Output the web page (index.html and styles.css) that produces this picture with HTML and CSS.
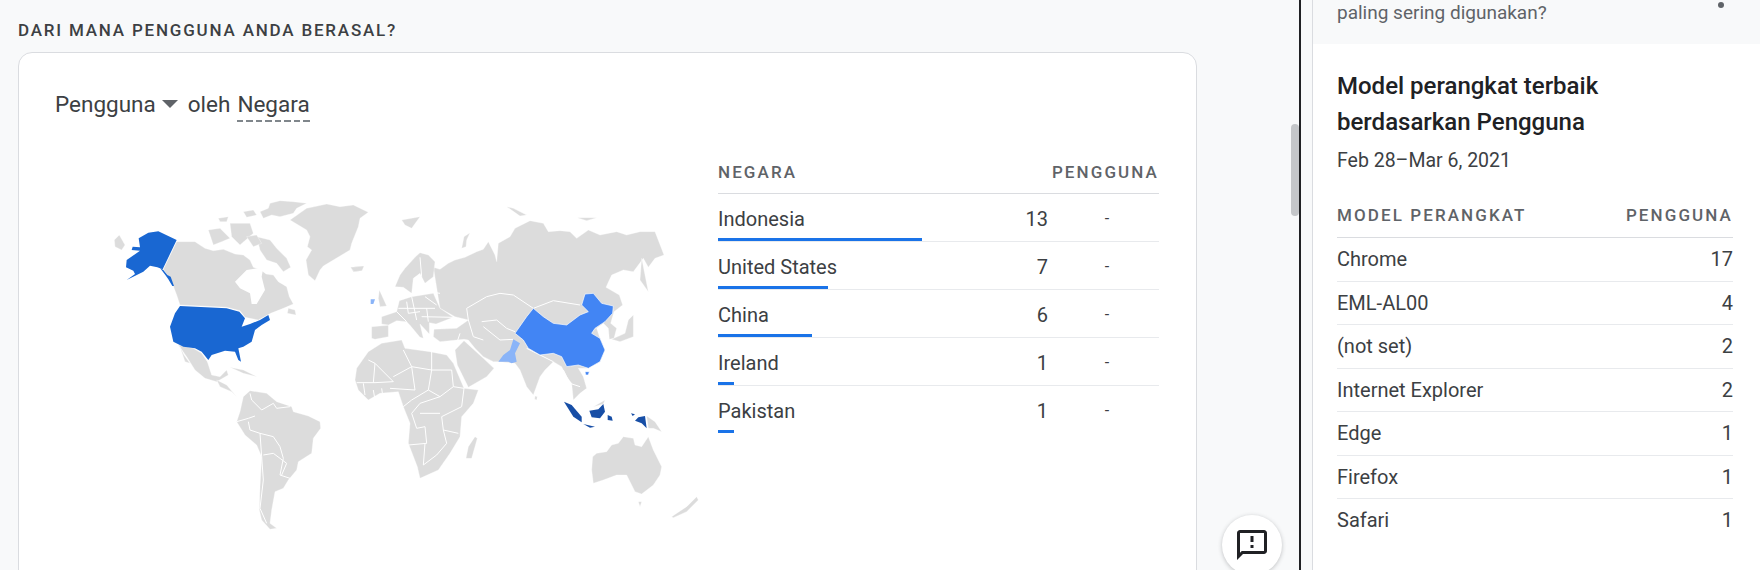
FILE: index.html
```html
<!DOCTYPE html>
<html lang="id">
<head>
  <meta charset="UTF-8">
  <title>Dari mana pengguna anda berasal?</title>
  <link rel="stylesheet" href="styles.css">
</head>
<body>

  <div class="page">
    <main class="main">
      <h2 class="section-title">DARI MANA PENGGUNA ANDA BERASAL?</h2>

      <section class="card">
        <div class="card-title">
          <span>Pengguna</span><span class="caret"></span>
          <span class="by">oleh</span>
          <span class="dim">Negara</span>
        </div>

        <div class="card-body">
          <svg class="map" viewBox="0 0 1890 1170" width="630" height="390">
            <!-- americas, coordinates are 3x screen px -->
            <g class="land">
              <polygon points="103,180 118,165 135,195 125,210 105,200"/>
              <polygon points="290,185 345,185 375,205 400,212 430,208 465,222 490,225 510,240 520,262 540,268 558,282 580,285 595,305 620,320 628,350 640,372 610,385 572,400 535,420 495,412 480,392 440,382 300,375 290,345 275,305 250,268"/>
              <polygon points="570,70 600,62 640,65 680,70 650,85 640,100 600,110 575,105 550,115 540,95 565,85"/>
              <polygon points="490,95 520,90 530,105 500,112"/>
              <polygon points="530,170 570,180 590,205 620,235 632,262 610,275 590,250 560,240 540,210"/>
              <polygon points="385,150 420,145 450,175 425,185 400,195"/>
              <polygon points="415,115 445,110 440,125 420,125"/>
              <polygon points="450,130 510,130 520,160 480,195 455,170"/>
              <polygon points="500,170 530,165 545,190 520,200"/>
              <polygon points="625,385 645,390 648,405 622,400"/>
              <polygon points="630,120 680,85 740,72 780,80 820,75 865,97 840,115 835,140 825,165 815,190 810,210 785,225 760,240 730,258 720,270 705,302 685,285 678,240 695,210 682,200 690,170 680,150"/>
              <polygon points="812,262 850,258 845,272 820,275"/>
              <polygon points="295,495 340,505 365,520 382,545 395,585 420,590 440,570 445,585 410,605 375,595 345,570 320,530"/>
              <polygon points="300,500 312,525 330,550 315,545"/>
              <polygon points="410,600 440,615 470,650 455,635 420,620"/>
              <polygon points="450,562 490,570 530,590 490,580"/>
              <polygon points="490,650 510,632 560,640 590,665 635,680 640,695 685,708 720,725 722,745 700,775 695,820 655,845 650,870 625,900 610,925 585,935 575,990 570,1030 590,1045 570,1048 545,1020 538,990 540,920 545,830 530,795 495,765 470,725 480,695"/>
            </g>
            <polygon class="bay" points="465,305 500,270 550,262 545,290 555,330 530,372 515,372 510,340 480,325"/>
            <g class="borders">
              <polyline points="510,640 515,660 545,690 580,670 590,685 630,680"/>
              <polyline points="470,725 505,715 525,708"/>
              <polyline points="505,725 510,750 540,760 580,770 600,800 610,835 600,885 630,895"/>
              <polyline points="540,760 545,830 550,900 540,985 560,1030"/>
              <polyline points="550,825 580,820 620,850 605,885"/>
            </g>
            <g class="us">
              <polygon points="176,175 205,158 235,154 290,180 248,268 232,262 210,257 190,275 140,300 165,282 160,272 138,262 140,240 152,232 180,212 155,210 158,200 180,202"/>
              <polygon points="240,264 250,270 262,285 272,290 282,318 277,318 265,298 256,285"/>
              <polygon points="300,378 440,385 478,395 495,415 485,440 510,432 540,420 565,405 570,420 545,435 525,450 515,485 490,500 475,505 483,545 475,540 465,515 435,512 395,525 385,540 365,515 345,505 310,500 280,485 270,440 285,400"/>
            </g>

            <!-- old world, drawn from a crop that starts 780 units to the right -->
            <g transform="translate(780 0)">
              <g class="land">
                <polygon points="185,120 240,110 215,145 195,135"/>
                <polygon points="500,80 520,85 560,105 540,108"/>
                <polygon points="712,113 770,113 740,122"/>
                <polygon points="365,205 372,170 415,142 390,158 380,180 378,200"/>
                <polygon points="280,262 300,268 325,250 345,240 375,232 410,215 430,208 445,185 465,225 470,245 475,190 510,170 525,145 570,122 610,130 625,155 660,152 690,155 710,175 745,150 780,165 830,155 860,165 900,155 945,155 972,225 945,235 925,262 910,235 895,255 880,275 850,270 815,285 798,322 838,345 848,375 822,395 812,430 830,445 822,475 808,478 805,445 790,430 770,445 780,475 795,510 780,545 745,565 715,565 730,590 740,625 720,640 700,660 695,610 680,590 665,560 640,545 615,570 600,590 580,645 560,620 540,570 525,550 480,545 460,545 430,530 405,505 385,480 372,478 300,485 280,470 282,448 350,445 385,420 345,410 300,385"/>
                <polygon points="345,510 372,482 430,535 462,565 440,590 385,622 352,555"/>
                <polygon points="165,320 180,285 195,265 225,232 240,218 265,225 285,245 280,290 255,310 240,280 220,295 215,340 190,322"/>
                <polygon points="118,330 125,345 140,378 120,380 115,355"/>
                <polygon points="125,410 170,395 178,362 215,350 280,340 300,385 340,412 288,432 268,428 268,462 240,432 250,475 240,472 212,438 200,425 170,422 145,435 125,432"/>
                <polygon points="95,440 145,436 145,470 105,478 95,475"/>
                <polygon points="50,565 85,515 125,490 185,480 195,505 270,515 320,525 340,550 372,625 415,630 400,670 365,710 360,770 330,820 295,870 240,895 232,860 205,790 210,730 190,680 175,635 120,640 85,660 55,630 45,600"/>
                <polygon points="405,770 412,775 395,835 378,835 385,800"/>
                <polygon points="32,262 72,258 66,272 42,275"/>
                <polygon points="905,235 912,270 925,335 900,300"/>
                <polygon points="880,405 880,470 840,485 815,478 855,460 865,420"/>
                <polygon points="585,648 592,650 590,660 584,658"/>
                <polygon points="760,680 795,660 790,672"/>
                <polygon points="920,708 945,725 965,755 940,745 925,745"/>
                <polygon points="758,830 770,820 800,815 815,795 835,790 850,770 880,775 885,795 905,800 925,770 940,810 965,860 960,885 940,915 905,942 885,935 875,915 860,885 830,885 790,900 760,910 755,870"/>
                <polygon points="895,965 905,965 900,980"/>
                <polygon points="995,1010 1040,980 1070,950 1075,960 1040,995 1000,1013"/>
              </g>
              <g class="borders">
                <polyline points="380,385 440,350 480,340 520,345 580,385"/>
                <polyline points="380,385 385,420 400,470 430,480"/>
                <polyline points="425,425 470,420 500,445 525,455"/>
                <polyline points="430,440 480,480 520,478"/>
                <polyline points="580,385 640,362 720,375"/>
                <polyline points="560,505 600,525 640,545"/>
                <polyline points="670,570 690,610 720,620"/>
                <polyline points="170,395 200,425"/>
                <polyline points="215,350 230,420"/>
                <polyline points="175,385 285,385"/>
                <polyline points="235,330 300,340"/>
                <polyline points="245,410 340,412"/>
                <polyline points="255,350 290,375"/>
                <polyline points="200,365 205,400 240,395"/>
                <polyline points="260,385 265,425"/>
                <polyline points="240,232 245,290"/>
                <polyline points="360,460 350,490 330,510"/>
                <polyline points="85,540 105,550 160,605 105,608 50,608"/>
                <polyline points="105,550 100,608"/>
                <polyline points="160,590 215,560 190,510"/>
                <polyline points="215,560 275,570 335,570"/>
                <polyline points="275,515 275,570 265,630 215,660 190,680"/>
                <polyline points="215,560 225,630 150,625"/>
                <polyline points="335,570 340,620 300,650 265,630"/>
                <polyline points="300,650 240,670 215,700 230,745"/>
                <polyline points="340,620 372,625 365,680 305,710 310,750 355,760"/>
                <polyline points="230,745 255,740 260,790 205,795"/>
                <polyline points="255,790 250,855 290,825 320,790 310,750"/>
                <polyline points="100,630 105,660"/>
                <polyline points="125,625 130,660"/>
                <polyline points="70,610 75,645"/>
                <polyline points="240,700 300,700"/>
              </g>
              <polygon class="ie" points="92,358 105,358 100,372 92,372"/>
              <polygon class="pk" points="520,478 540,490 525,520 530,545 515,550 505,545 475,545 490,525 510,510"/>
              <g class="cn">
                <polygon points="525,460 560,410 580,385 610,410 640,430 680,435 720,405 745,395 725,375 735,342 760,340 785,370 820,378 818,400 795,425 765,445 755,460 780,475 795,510 780,545 745,565 715,555 680,560 665,530 640,520 600,525 565,505 550,480"/>
                <polygon points="735,575 748,575 745,585 737,585"/>
              </g>
              <g class="id">
                <polygon points="672,665 695,675 725,710 725,727 700,710"/>
                <polygon points="730,732 765,740 750,743"/>
                <polygon points="748,692 775,688 790,672 795,695 780,715 755,712"/>
                <polygon points="803,705 815,710 818,722 803,720"/>
                <polygon points="895,712 915,708 920,745 905,730 885,722"/>
                <polygon points="873,700 885,703 878,708"/>
              </g>
            </g>
          </svg>

          <div class="geo-table">
            <div class="geo-head"><span>NEGARA</span><span>PENGGUNA</span></div>
            <div class="geo-row">
              <div class="geo-cells"><span class="geo-name">Indonesia</span><span class="geo-num">13</span><span class="geo-dash">-</span></div>
              <div class="bar" style="width: 204px"></div>
            </div>
            <div class="geo-row">
              <div class="geo-cells"><span class="geo-name">United States</span><span class="geo-num">7</span><span class="geo-dash">-</span></div>
              <div class="bar" style="width: 110px"></div>
            </div>
            <div class="geo-row">
              <div class="geo-cells"><span class="geo-name">China</span><span class="geo-num">6</span><span class="geo-dash">-</span></div>
              <div class="bar" style="width: 94px"></div>
            </div>
            <div class="geo-row">
              <div class="geo-cells"><span class="geo-name">Ireland</span><span class="geo-num">1</span><span class="geo-dash">-</span></div>
              <div class="bar" style="width: 16px"></div>
            </div>
            <div class="geo-row last">
              <div class="geo-cells"><span class="geo-name">Pakistan</span><span class="geo-num">1</span><span class="geo-dash">-</span></div>
              <div class="bar" style="width: 16px"></div>
            </div>
          </div>
        </div>
      </section>

      <div class="scroll-thumb"></div>

      <button class="feedback">
        <svg viewBox="0 0 24 24" width="36" height="36">
          <path d="M20 2H4c-1.1 0-2 .9-2 2v18l4-4h14c1.100 0 2-.9 2-2V4c0-1.100-.9-2-2-2zm0 14H5.170L4 17.170V4h16v12z"/>
          <path d="M11 12h2v2h-2zM11 6h2v4h-2z"/>
        </svg>
      </button>
    </main>

    <aside class="side">
      <div class="question">
        <span>paling sering digunakan?</span>
        <span class="dot"></span>
      </div>
      <div class="model-card">
        <h3>Model perangkat terbaik berdasarkan Pengguna</h3>
        <p class="date">Feb 28–Mar 6, 2021</p>
        <div class="model-head"><span>MODEL PERANGKAT</span><span>PENGGUNA</span></div>
        <div class="model-row"><span>Chrome</span><span class="val">17</span></div>
        <div class="model-row"><span>EML-AL00</span><span class="val">4</span></div>
        <div class="model-row"><span>(not set)</span><span class="val">2</span></div>
        <div class="model-row"><span>Internet Explorer</span><span class="val">2</span></div>
        <div class="model-row"><span>Edge</span><span class="val">1</span></div>
        <div class="model-row"><span>Firefox</span><span class="val">1</span></div>
        <div class="model-row last"><span>Safari</span><span class="val">1</span></div>
      </div>
    </aside>
  </div>

</body>
</html>
```

FILE: styles.css
```css
body {
  margin: 0;
  font-family: Roboto, sans-serif;
  background-color: #f8f9fa;
  color: #3c4043;
  overflow: hidden;
}

.page {
  display: flex;
  height: 570px;
  overflow: hidden;
}

.main {
  position: relative;
  box-sizing: border-box;
  width: 1301px;
  flex-shrink: 0;
  padding-left: 18px;
  border-right: 2px solid #202124;
}

.section-title {
  margin: 0;
  height: 52px;
  line-height: 60px;
  font-size: 17px;
  font-weight: 500;
  letter-spacing: 1.800px;
  color: #3c4043;
}

.card {
  box-sizing: border-box;
  width: 1179px;
  height: 600px;
  padding: 36px 36px 0;
  background: #fff;
  border: 1px solid #dadce0;
  border-radius: 14px;
}

.card-title {
  display: flex;
  align-items: center;
  height: 30px;
  font-size: 22.500px;
  color: #3c4043;
}

.caret {
  width: 0;
  height: 0;
  margin-left: 6px;
  border-left: 8px solid transparent;
  border-right: 8px solid transparent;
  border-top: 8px solid #5f6368;
}

.by {
  margin-left: 10px;
}

.dim {
  position: relative;
  margin-left: 7px;
}

.dim::after {
  content: "";
  position: absolute;
  left: 0;
  right: 0;
  bottom: -5px;
  height: 2px;
  background: repeating-linear-gradient(90deg, #80868b 0 6px, transparent 6px 9.500px);
}

.card-body {
  display: flex;
  align-items: flex-start;
  margin-top: 31px;
  margin-left: 6px;
}

.map {
  flex-shrink: 0;
  margin-left: 19px;
  margin-top: 30px;
}

.land polygon {
  fill: #dcdcdc;
  stroke: #fff;
  stroke-width: 1;
}

.bay {
  fill: #fff;
}

.borders polyline {
  fill: none;
  stroke: #fff;
  stroke-width: 3;
}

.us polygon {
  fill: #1967d2;
}

.cn polygon {
  fill: #4285f4;
  stroke: #fff;
  stroke-width: 2;
}

.id polygon {
  fill: #174ea6;
}

.ie,
.pk {
  fill: #8ab4f8;
}

.geo-table {
  width: 441px;
  margin-left: 8px;
}

.geo-head {
  display: flex;
  justify-content: space-between;
  align-items: center;
  height: 43px;
  font-size: 17px;
  font-weight: 500;
  letter-spacing: 2.100px;
  color: #5f6368;
  border-bottom: 1px solid #dadce0;
}

.geo-row {
  border-bottom: 1px solid #e8eaed;
}

.geo-row.last {
  border-bottom: 0;
}

.geo-cells {
  display: flex;
  align-items: center;
  height: 39px;
  padding-top: 5px;
  font-size: 20px;
}

.geo-name {
  flex: 1;
}

.geo-dash {
  box-sizing: border-box;
  width: 111px;
  padding-left: 7px;
  text-align: center;
  font-size: 16px;
}

.bar {
  height: 3px;
  background-color: #1a73e8;
}

.scroll-thumb {
  position: absolute;
  top: 124px;
  right: 0;
  width: 8px;
  height: 92px;
  background: #c4c6c9;
  border-radius: 4px;
}

.feedback {
  position: absolute;
  left: 1222px;
  top: 515px;
  width: 60px;
  height: 60px;
  padding: 0;
  display: flex;
  align-items: center;
  justify-content: center;
  background: #fff;
  border: 0;
  border-radius: 50%;
  box-shadow: 0 1px 4px rgba(60, 64, 67, 0.3);
}

.feedback path {
  fill: #202124;
}

.side {
  flex: 1;
  margin-left: 11px;
  border-left: 1px solid #dadce0;
}

.question {
  display: flex;
  justify-content: space-between;
  height: 44px;
  box-sizing: border-box;
  padding-left: 24px;
  font-size: 19px;
  line-height: 26px;
  color: #5f6368;
}

.dot {
  width: 6px;
  height: 6px;
  margin: 2px 36px 0 0;
  border-radius: 50%;
  background: #5f6368;
}

.model-card {
  height: 526px;
  padding: 24px 27px 0 24px;
  background: #fff;
}

.model-card h3 {
  width: 300px;
  margin: 0;
  font-size: 24px;
  font-weight: 500;
  line-height: 36px;
  color: #202124;
}

.date {
  margin: 9px 0 0;
  font-size: 19.500px;
  line-height: 24px;
  color: #3c4043;
}

.model-head {
  display: flex;
  justify-content: space-between;
  align-items: center;
  height: 44px;
  margin-top: 20px;
  font-size: 17px;
  font-weight: 500;
  letter-spacing: 2.100px;
  color: #5f6368;
  border-bottom: 1px solid #dadce0;
}

.model-row {
  display: flex;
  justify-content: space-between;
  align-items: center;
  height: 42.500px;
  font-size: 20px;
  border-bottom: 1px solid #e8eaed;
}

.model-row.last {
  border-bottom: 0;
}
```
